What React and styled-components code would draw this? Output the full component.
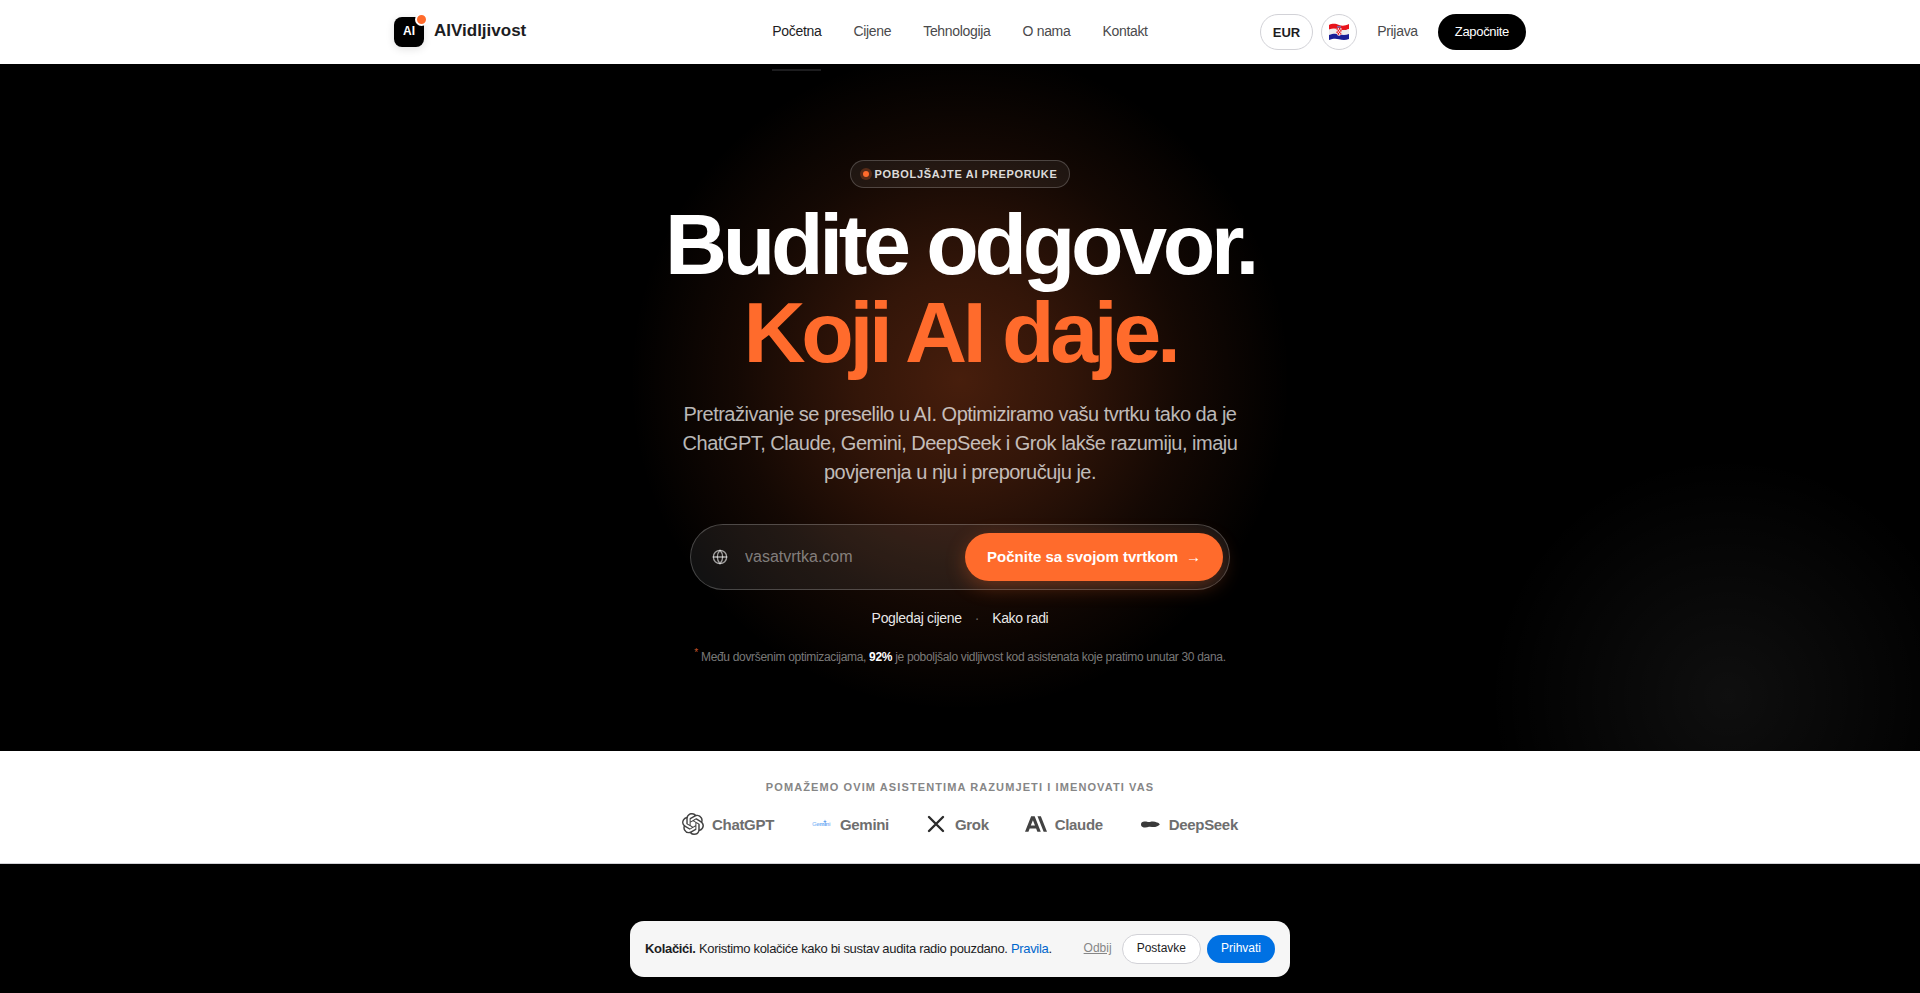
import React, { useState } from "react";
import styled, { createGlobalStyle, css } from "styled-components";
import { SiOpenai, SiAnthropic } from "react-icons/si";
import { Globe } from "lucide-react";

const navItems = ["Početna", "Cijene", "Tehnologija", "O nama", "Kontakt"];

const assistants = [
  { name: "ChatGPT", icon: <SiOpenai size={22} /> },
  { name: "Gemini", icon: <GeminiMark /> },
  { name: "Grok", icon: <GrokMark /> },
  { name: "Claude", icon: <SiAnthropic size={22} /> },
  { name: "DeepSeek", icon: <DeepSeekMark /> },
];

function App() {
  const [domain, setDomain] = useState("");

  return (
    <>
      <GlobalStyle />
      <Header>
        <HeaderInner>
          <Brand href="#">
            <BrandMark>AI</BrandMark>
            <BrandName>AIVidljivost</BrandName>
          </Brand>
          <Nav>
            {navItems.map((item, i) => (
              <NavLink key={item} href="#" $active={i === 0}>
                {item}
              </NavLink>
            ))}
          </Nav>
          <Actions>
            <Currency type="button">EUR</Currency>
            <Language type="button" aria-label="Hrvatski">
              <CroatianFlag />
            </Language>
            <Login href="#">Prijava</Login>
            <Start type="button">Započnite</Start>
          </Actions>
        </HeaderInner>
      </Header>

      <Hero>
        <Badge>
          <BadgeDot />
          POBOLJŠAJTE AI PREPORUKE
        </Badge>
        <Title>
          Budite odgovor.
          <Accent>Koji AI daje.</Accent>
        </Title>
        <Lead>
          Pretraživanje se preselilo u AI. Optimiziramo vašu tvrtku tako da je
          ChatGPT, Claude, Gemini, DeepSeek i Grok lakše razumiju, imaju
          povjerenja u nju i preporučuju je.
        </Lead>
        <DomainForm onSubmit={(e) => e.preventDefault()}>
          <Globe size={16} strokeWidth={2} />
          <DomainInput
            aria-label="Domena"
            placeholder="vasatvrtka.com"
            value={domain}
            onChange={(e) => setDomain(e.target.value)}
          />
          <Submit type="submit">
            Počnite sa svojom tvrtkom <Arrow>→</Arrow>
          </Submit>
        </DomainForm>
        <HeroLinks>
          <HeroLink href="#">Pogledaj cijene</HeroLink>
          <Dot>·</Dot>
          <HeroLink href="#">Kako radi</HeroLink>
        </HeroLinks>
        <Footnote>
          <Star>*</Star> Među dovršenim optimizacijama, <b>92%</b> je poboljšalo
          vidljivost kod asistenata koje pratimo unutar 30 dana.
        </Footnote>
      </Hero>

      <Assistants>
        <AssistantsLabel>
          POMAŽEMO OVIM ASISTENTIMA RAZUMJETI I IMENOVATI VAS
        </AssistantsLabel>
        <AssistantList>
          {assistants.map((item) => (
            <Assistant key={item.name}>
              {item.icon}
              {item.name}
            </Assistant>
          ))}
        </AssistantList>
      </Assistants>

      <Cookies>
        <CookieText>
          <b>Kolačići.</b> Koristimo kolačiće kako bi sustav audita radio
          pouzdano. <a href="#">Pravila</a>.
        </CookieText>
        <Decline type="button">Odbij</Decline>
        <CookieButton type="button">Postavke</CookieButton>
        <CookieButton type="button" $primary>
          Prihvati
        </CookieButton>
      </Cookies>
    </>
  );
}

export default App;

function GeminiMark() {
  return (
    <svg width="22" height="22" viewBox="0 0 22 22" aria-hidden="true">
      <defs>
        <linearGradient id="gemini" x1="0" x2="1">
          <stop offset="0" stopColor="#a9cdf8" />
          <stop offset="0.7" stopColor="#5a9df0" />
          <stop offset="1" stopColor="#a9cdf8" />
        </linearGradient>
      </defs>
      <text
        x="2"
        y="13"
        fontSize="6"
        fontFamily="Liberation Sans, sans-serif"
        fill="url(#gemini)"
      >
        Gemini
      </text>
      <path
        d="M15 6.500 L15.500 8 L17 8.500 L15.500 9 L15 10.500 L14.500 9 L13 8.500 L14.500 8 Z"
        fill="#5a9df0"
      />
    </svg>
  );
}

function GrokMark() {
  return (
    <svg width="22" height="22" viewBox="0 0 22 22" aria-hidden="true">
      <path
        d="M4 4 L18 18 M18 4 L4 18"
        stroke="#2b2b2b"
        strokeWidth="2.4"
        strokeLinecap="round"
      />
    </svg>
  );
}

function DeepSeekMark() {
  return (
    <svg width="22" height="22" viewBox="0 0 22 22" aria-hidden="true">
      <path
        d="M2 11.5 C2 9 4 8.4 6 8.6 C8 8.6 9 9.4 11 9 C13 8.4 16 8.4 18 9.6 C19.5 10 20.5 10.8 20.8 11.6 C19.5 12.4 19 13.4 17 13.8 C15 14.6 12 13.4 10 13.8 C8 14.6 5 14.8 3.6 14 C2.4 13.4 2 12.6 2 11.5 Z"
        fill="#3a3a3a"
      />
    </svg>
  );
}

function CroatianFlag() {
  return (
    <svg width="22" height="18" viewBox="0 0 22 18" aria-hidden="true">
      <path d="M1 2 C5 0 8 1 11 2 S17 3 21 1 V6 C17 8 14 7 11 6.5 S5 5.500 1 7 Z" fill="#e8131b" />
      <path d="M1 6.500 C5 5 8 5.600 11 6.500 S17 7.500 21 6 V11 C17 12.500 14 12 11 11.300 S5 10.400 1 12 Z" fill="#eeeeee" />
      <path d="M1 12 C5 10.400 8 10.600 11 11.300 S17 12.500 21 11 V16 C17 17.600 14 17 11 16.300 S5 15.500 1 17 Z" fill="#1a1f96" />
      <path d="M8.500 5 H13.500 V10 Q13.500 12.500 11 13 Q8.500 12.500 8.500 10 Z" fill="#f4d6d8" />
      <path
        d="M8.500 5h1.250v1.700h-1.250z M11 5h1.250v1.700h-1.250z M9.750 6.700h1.250v1.700h-1.250z M12.250 6.700h1.250v1.700h-1.250z M8.500 8.400h1.250v1.700h-1.250z M11 8.400h1.250v1.700h-1.250z M9.750 10.100h1.250v1.700h-1.250z M12.250 10.100h1v1.400h-1z"
        fill="#e8131b"
      />
      <path d="M8.800 4.600 L9.400 3 L10.300 3.600 L11 2.700 L11.700 3.600 L12.600 3 L13.200 4.600 Z" fill="#5f7fd0" />
    </svg>
  );
}

const GlobalStyle = createGlobalStyle`
  *,
  *::after {
    box-sizing: border-box;
  }

  body {
    margin: 0;
    min-height: 100vh;
    background: #000000;
    color: #1d1d1f;
    font-family: "Liberation Sans", Arial, sans-serif;
    letter-spacing: -0.02em;
  }

  a {
    color: inherit;
    text-decoration: none;
  }

  button,
  input {
    font-family: inherit;
    letter-spacing: inherit;
  }

  button {
    cursor: pointer;
  }
`;

const Header = styled.header`
  position: relative;
  z-index: 1;
  background: #ffffff;
`;

const HeaderInner = styled.div`
  display: grid;
  grid-template-columns: 1fr auto 1fr;
  align-items: center;
  max-width: 1180px;
  height: 64px;
  margin: 0 auto;
  padding: 0 24px;
`;

const Brand = styled.a`
  display: flex;
  align-items: center;
  gap: 10px;
  font-size: 17px;
  font-weight: 700;
  letter-spacing: 0;
`;

const BrandName = styled.span`
  padding-bottom: 2px;
`;

const BrandMark = styled.span`
  position: relative;
  display: grid;
  place-items: center;
  width: 30px;
  height: 30px;
  padding-bottom: 2px;
  border-radius: 8px;
  background: #000000;
  color: #ffffff;
  font-size: 12px;
  box-shadow: 0 2px 8px rgba(0, 0, 0, 0.12);

  &::after {
    content: "";
    position: absolute;
    top: -4px;
    right: -4px;
    width: 13px;
    height: 13px;
    border: 2px solid #ffffff;
    border-radius: 50%;
    background: #ff6b2c;
  }
`;

const Nav = styled.nav`
  display: flex;
  gap: 32px;
  padding-bottom: 2px;
`;

const NavLink = styled.a`
  position: relative;
  color: #4a4a4c;
  font-size: 14px;
  line-height: 20px;

  ${({ $active }) =>
    $active &&
    css`
      color: #1d1d1f;

      &::after {
        content: "";
        position: absolute;
        left: 0;
        right: 0;
        top: 48px;
        height: 2px;
        background: #1d1d1f;
      }
    `}
`;

const Actions = styled.div`
  display: flex;
  align-items: center;
  justify-content: flex-end;
  gap: 8px;
`;

const Currency = styled.button`
  height: 36px;
  padding: 0 12px;
  border: 1px solid #d2d2d7;
  border-radius: 18px;
  background: #ffffff;
  color: #1d1d1f;
  font-size: 13px;
  font-weight: 700;
  letter-spacing: 0;
`;

const Language = styled.button`
  display: grid;
  place-items: center;
  width: 36px;
  height: 36px;
  padding: 0;
  border: 1px solid #d2d2d7;
  border-radius: 50%;
  background: #ffffff;
`;

const Login = styled.a`
  padding: 0 12px 2px;
  color: #4a4a4c;
  font-size: 14px;
`;

const Start = styled.button`
  height: 36px;
  padding: 0 17px 2px;
  border: 0;
  border-radius: 18px;
  background: #000000;
  color: #ffffff;
  font-size: 13px;
`;

const Hero = styled.section`
  display: flex;
  flex-direction: column;
  align-items: center;
  padding: 96px 24px 84px;
  text-align: center;
  background:
    radial-gradient(circle 330px at 50% 46%, rgba(255, 107, 44, 0.28), rgba(255, 107, 44, 0.2) 32%, rgba(255, 107, 44, 0.08) 68%, transparent 100%),
    radial-gradient(circle 240px at 90% 92%, rgba(255, 255, 255, 0.06), transparent),
    #000000;
`;

const Badge = styled.div`
  display: flex;
  align-items: center;
  gap: 6px;
  height: 28px;
  padding: 0 12px;
  border: 1px solid rgba(255, 255, 255, 0.2);
  border-radius: 14px;
  background: rgba(255, 255, 255, 0.06);
  color: rgba(255, 255, 255, 0.86);
  font-size: 11px;
  font-weight: 700;
  letter-spacing: 0.06em;
`;

const BadgeDot = styled.span`
  width: 6px;
  height: 6px;
  border-radius: 50%;
  background: #ff6b2c;
  box-shadow: 0 0 0 3px rgba(255, 107, 44, 0.25);
`;

const Title = styled.h1`
  margin: 12px 0 24px;
  color: #ffffff;
  font-size: 86px;
  font-weight: 700;
  line-height: 88px;
  letter-spacing: -0.05em;
`;

const Accent = styled.span`
  display: block;
  color: #ff6b2c;
`;

const Lead = styled.p`
  max-width: 600px;
  margin: 0 0 37px;
  color: rgba(255, 255, 255, 0.72);
  font-size: 20px;
  line-height: 29px;
  letter-spacing: -0.025em;
`;

const DomainForm = styled.form`
  display: flex;
  align-items: center;
  gap: 17px;
  width: 100%;
  max-width: 540px;
  padding: 8px 6px 8px 21px;
  border: 1px solid rgba(255, 255, 255, 0.22);
  border-radius: 33px;
  background: rgba(255, 255, 255, 0.07);
  color: rgba(255, 255, 255, 0.6);

  svg {
    flex: none;
  }
`;

const DomainInput = styled.input`
  flex: 1;
  min-width: 0;
  padding: 0;
  border: 0;
  outline: 0;
  background: transparent;
  color: #ffffff;
  font-size: 16px;
  letter-spacing: 0;

  &::placeholder {
    color: rgba(255, 255, 255, 0.45);
  }
`;

const Submit = styled.button`
  display: flex;
  align-items: center;
  gap: 8px;
  height: 48px;
  padding: 0 22px 2px;
  border: 0;
  border-radius: 24px;
  background: #ff6b2c;
  color: #ffffff;
  font-size: 15px;
  font-weight: 700;
  letter-spacing: 0;
  box-shadow: 0 6px 20px rgba(255, 107, 44, 0.3);
`;

const Arrow = styled.span`
  font-size: 15px;
`;

const HeroLinks = styled.div`
  display: flex;
  gap: 13px;
  margin-top: 18px;
  font-size: 14px;
  line-height: 20px;
`;

const HeroLink = styled.a`
  color: rgba(255, 255, 255, 0.92);
`;

const Dot = styled.span`
  color: rgba(255, 255, 255, 0.4);
`;

const Footnote = styled.p`
  margin: 19px 0 0;
  color: rgba(255, 255, 255, 0.48);
  font-size: 12px;
  line-height: 20px;

  b {
    color: #ffffff;
  }
`;

const Star = styled.sup`
  color: #c8552a;
  font-size: 10px;
  line-height: 0;
`;

const Assistants = styled.section`
  display: flex;
  flex-direction: column;
  align-items: center;
  gap: 18px;
  padding: 28px 24px;
  border-bottom: 1px solid #d2d2d7;
  background: #ffffff;
`;

const AssistantsLabel = styled.p`
  margin: 0;
  color: #868686;
  font-size: 11px;
  font-weight: 700;
  line-height: 16px;
  letter-spacing: 0.1em;
`;

const AssistantList = styled.div`
  display: flex;
  flex-wrap: wrap;
  justify-content: center;
  gap: 36px;
`;

const Assistant = styled.div`
  display: flex;
  align-items: center;
  gap: 8px;
  color: #6e6e6e;
  font-size: 15px;
  font-weight: 700;

  svg {
    color: #424242;
  }
`;

const Cookies = styled.aside`
  position: fixed;
  left: 50%;
  bottom: 16px;
  z-index: 2;
  display: flex;
  align-items: center;
  width: 660px;
  max-width: calc(100% - 32px);
  height: 56px;
  padding: 0 15px;
  border-radius: 14px;
  background: #f6f6f6;
  font-size: 13px;
  transform: translateX(-50%);
`;

const CookieText = styled.p`
  flex: 1;
  margin: 0;
  padding-bottom: 2px;

  a {
    color: #0066cc;
  }
`;

const Decline = styled.button`
  margin-right: 10px;
  padding: 0 0 2px;
  border: 0;
  background: transparent;
  color: #868686;
  font-size: 12px;
  letter-spacing: 0;
  text-decoration: underline;
`;

const CookieButton = styled.button`
  height: ${({ $primary }) => ($primary ? "28px" : "30px")};
  margin-left: ${({ $primary }) => ($primary ? "6px" : "0")};
  padding: 0 14px 2px;
  border: ${({ $primary }) => ($primary ? "0" : "1px solid #d2d2d7")};
  border-radius: 15px;
  background: ${({ $primary }) => ($primary ? "#0071e3" : "#ffffff")};
  color: ${({ $primary }) => ($primary ? "#ffffff" : "#1d1d1f")};
  font-size: 12px;
  letter-spacing: 0;
`;
